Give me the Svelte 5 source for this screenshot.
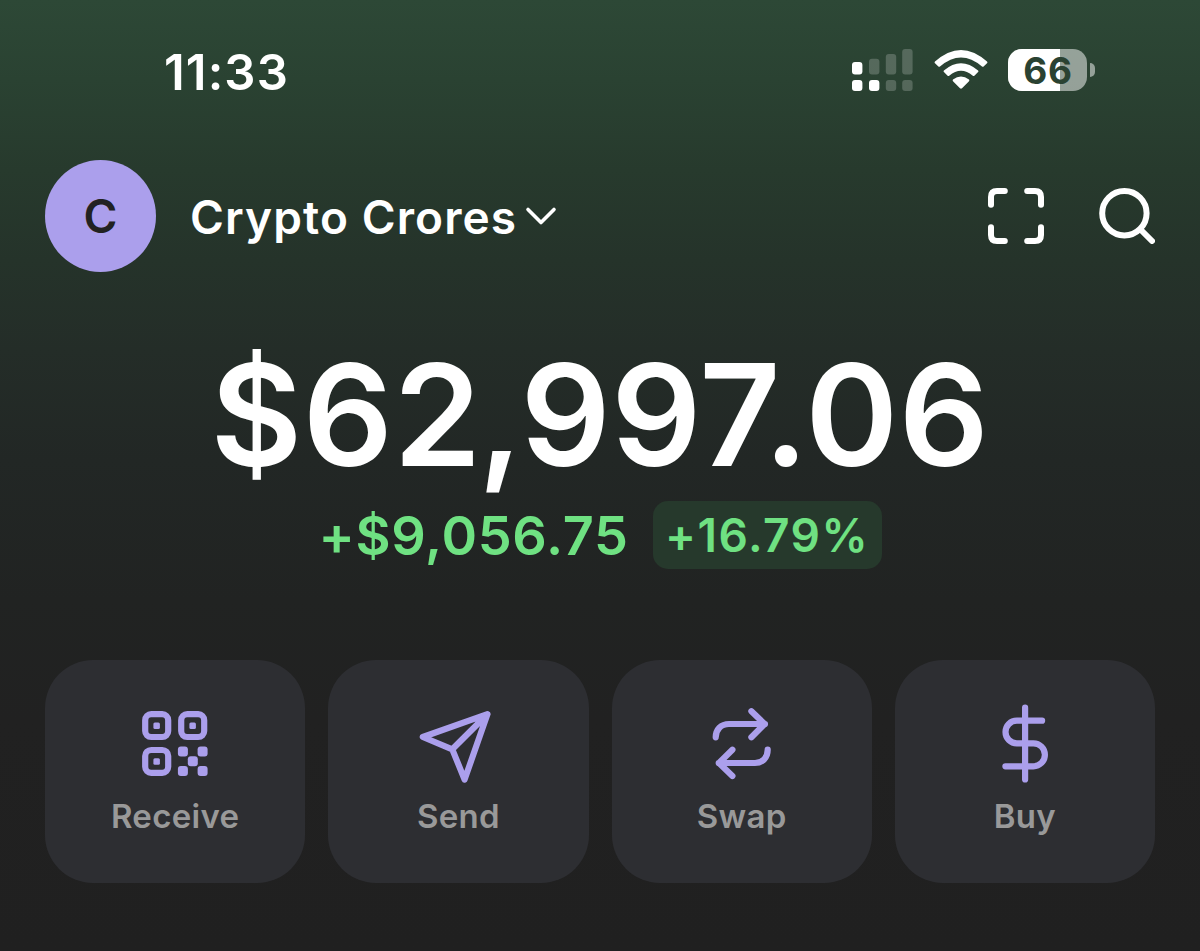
<script>
  let time = "11:33";
  let battery = 66;
  let account = "Crypto Crores";
  let balance = "$62,997.06";
  let change = "+$9,056.75";
  let percent = "+16.79%";

  let [thousands, rest] = balance.split(",");

  let actions = [
    { id: "receive", label: "Receive" },
    { id: "send", label: "Send" },
    { id: "swap", label: "Swap" },
    { id: "buy", label: "Buy" }
  ];
</script>

<main class="wallet">
  <div class="status">
    <span class="time">{time}</span>
    <div class="status-icons">
      <svg class="signal" viewBox="0 0 61 42" width="61" height="42" fill="#fff">
        <rect x="0" y="13" width="10.4" height="12.6" rx="3" />
        <g opacity="0.2">
          <rect x="17" y="9.7" width="10.4" height="15.9" rx="3" />
          <rect x="33.8" y="5" width="10.4" height="20.6" rx="3" />
          <rect x="50.2" y="0" width="10.4" height="25.6" rx="3" />
          <rect x="33.8" y="31" width="10.4" height="11" rx="3" />
          <rect x="50.2" y="31" width="10.4" height="11" rx="3" />
        </g>
        <rect x="0" y="31" width="10.4" height="11" rx="3" />
        <rect x="17" y="31" width="10.4" height="11" rx="3" />
      </svg>
      <svg class="wifi" viewBox="0 0 54 40" width="54" height="40" fill="#fff">
        <path d="M1 11.6 Q27 -11.6 53 11.6 Q53.8 12.4 53 13.2 L49.6 16.5 Q48.8 17.2 48 16.5 Q27 -1.6 6 16.5 Q5.2 17.2 4.4 16.5 L1 13.2 Q0.2 12.4 1 11.6 Z" />
        <path d="M9.9 20.5 Q27 6 44.1 20.5 Q44.9 21.3 44.1 22.1 L40.4 25.7 Q39.6 26.4 38.8 25.7 Q27 15.8 15.2 25.7 Q14.4 26.4 13.6 25.7 L9.9 22.1 Q9.1 21.3 9.9 20.5 Z" />
        <path d="M19 29.6 Q27 23.6 35 29.6 Q35.8 30.4 35 31.2 L28 38.3 Q27 39.2 26 38.3 L19 31.2 Q18.2 30.4 19 29.6 Z" />
      </svg>
      <div class="battery">
        <div class="cell">
          <div class="level" style="width: {battery}%"></div>
          <span class="battery-text">{battery}</span>
        </div>
        <div class="nub"></div>
      </div>
    </div>
  </div>

  <header class="header">
    <div class="avatar">C</div>
    <div class="account">
      <span class="account-name">{account}</span>
      <svg class="chevron" viewBox="0 0 32 20" width="32" height="20">
        <path d="M3 3.5 L16 16.5 L29 3.5" />
      </svg>
    </div>
    <svg class="tool" viewBox="0 0 56 56" width="56" height="56">
      <path d="M3 16.8 V9 Q3 3 9 3 H16.8 M39.2 3 H47 Q53 3 53 9 V16.8 M53 39.2 V47 Q53 53 47 53 H39.2 M16.8 53 H9 Q3 53 3 47 V39.2" />
    </svg>
    <svg class="tool" viewBox="0 0 56 56" width="56" height="56">
      <circle cx="25.4" cy="25.2" r="22.2" />
      <path d="M41.5 41.5 L53 53" />
    </svg>
  </header>

  <section class="summary">
    <div class="balance">{thousands}<span class="comma">,</span>{rest}</div>
    <div class="change">
      <span class="amount">{change}</span>
      <span class="percent">{percent}</span>
    </div>
  </section>

  <nav class="actions">
    {#each actions as action (action.id)}
      <div class="action">
        <svg class="icon" viewBox="0 0 84 84" width="84" height="84">
          {#if action.id === "receive"}
            <rect x="12.2" y="12.2" width="23" height="22.8" rx="6" />
            <rect x="48.2" y="12.2" width="23" height="22.8" rx="6" />
            <rect x="12.2" y="48" width="23" height="22.8" rx="6" />
            <g class="solid">
              <rect x="20.4" y="20.4" width="6.5" height="6.5" rx="1.5" />
              <rect x="56.4" y="20.4" width="6.5" height="6.5" rx="1.5" />
              <rect x="20.4" y="56.2" width="6.5" height="6.5" rx="1.5" />
              <rect x="44.9" y="44.6" width="10" height="10" rx="3" />
              <rect x="64.6" y="44.6" width="10" height="10" rx="3" />
              <rect x="54.8" y="54.3" width="10" height="10" rx="3" />
              <rect x="44.9" y="64.1" width="10" height="10" rx="3" />
              <rect x="64.6" y="64.1" width="10" height="10" rx="3" />
            </g>
          {:else if action.id === "send"}
            <path d="M71.4 12.2 L6.8 35 L36.3 47.3 L48.6 77.6 Z M71.4 12.2 L36.3 47.3" />
          {:else if action.id === "swap"}
            <path d="M15.7 35.3 C15.7 27.5 21 22 29 22 H65 M51.4 9.2 L64.6 22 L51.4 35.3" />
            <path d="M67.7 47.7 C67.7 55.5 62.5 61 55 61 H18.7 M32.4 47.7 L19 61 L32.4 74" />
          {:else}
            <path d="M42.1 5.7 V77.5 M59.1 18.7 H33.8 A11.3 11.3 0 0 0 33.8 41.3 H50.4 A11.5 11.5 0 0 1 50.4 64.3 H22.4" />
          {/if}
        </svg>
        <span class="label">{action.label}</span>
      </div>
    {/each}
  </nav>
</main>

<style>
  :global(body) {
    margin: 0;
    background: #212121;
  }

  .wallet {
    box-sizing: border-box;
    width: 1200px;
    height: 951px;
    padding: 0 45px;
    overflow: hidden;
    font-family: Inter, "Liberation Sans", sans-serif;
    color: #fff;
    background: linear-gradient(#2d4836 0, #2a4232 80px, #273a2d 170px, #25332a 260px, #242d28 350px, #222725 460px, #212322 600px, #212121 720px, #202020 951px);
  }

  .status {
    display: flex;
    justify-content: space-between;
    align-items: center;
    height: 140px;
    padding: 0 60px 0 119px;
  }

  .time {
    padding-top: 5px;
    font-size: 49px;
    font-weight: 600;
    line-height: 58px;
    letter-spacing: 1.1px;
  }

  .status-icons {
    display: flex;
    align-items: center;
    height: 42px;
  }

  .wifi {
    margin: 0 20px 0 21px;
  }

  .battery {
    display: flex;
    align-items: center;
    gap: 3px;
  }

  .cell {
    position: relative;
    width: 79px;
    height: 42px;
    border-radius: 14px;
    background: rgba(255, 255, 255, 0.5);
  }

  .level {
    height: 100%;
    border-radius: 14px 0 0 14px;
    background: #fff;
  }

  .battery-text {
    position: absolute;
    top: 0;
    left: 0;
    width: 80px;
    line-height: 43px;
    text-align: center;
    font-size: 37px;
    font-weight: 700;
    letter-spacing: 0.6px;
    color: #2a4232;
  }

  .nub {
    width: 5px;
    height: 14px;
    border-radius: 0 5px 5px 0;
    background: rgba(255, 255, 255, 0.5);
  }

  .header {
    display: flex;
    align-items: center;
    height: 112px;
    margin-top: 20px;
  }

  .avatar {
    width: 111px;
    height: 112px;
    border-radius: 50%;
    background: #ab9fec;
    color: #222;
    font-size: 46px;
    font-weight: 600;
    line-height: 113px;
    text-align: center;
  }

  .account {
    display: flex;
    align-items: center;
    flex: 1;
    margin-left: 34px;
  }

  .account-name {
    padding-top: 2px;
    font-size: 46px;
    font-weight: 600;
    line-height: 60px;
    letter-spacing: 1.1px;
  }

  .chevron {
    margin-left: 8px;
  }

  .chevron path {
    fill: none;
    stroke: #fff;
    stroke-width: 3.6;
    stroke-linecap: round;
    stroke-linejoin: round;
  }

  .tool {
    fill: none;
    stroke: #fff;
    stroke-width: 6;
    stroke-linecap: round;
  }

  .tool + .tool {
    margin-left: 55px;
  }

  .summary {
    height: 388px;
    text-align: center;
  }

  .balance {
    padding-top: 58px;
    font-size: 141px;
    font-weight: 600;
    line-height: 170px;
    letter-spacing: 0.6px;
    white-space: nowrap;
  }

  /* tighten the gap round the separator */
  .comma {
    margin: 0 -3px 0 -4px;
  }

  .change {
    display: flex;
    justify-content: center;
    align-items: center;
    gap: 24px;
    height: 68px;
    margin-top: 1px;
    color: #6fe182;
  }

  .amount {
    font-size: 54px;
    font-weight: 600;
    letter-spacing: 0.7px;
  }

  .percent {
    box-sizing: border-box;
    width: 229px;
    height: 68px;
    border-radius: 15px;
    background: #26392c;
    font-size: 46px;
    font-weight: 600;
    line-height: 68px;
    letter-spacing: 1.5px;
  }

  .actions {
    display: grid;
    grid-template-columns: repeat(4, 1fr);
    gap: 23px;
  }

  .action {
    display: flex;
    flex-direction: column;
    align-items: center;
    box-sizing: border-box;
    height: 223px;
    padding-top: 42px;
    border-radius: 48px;
    background: #2d2e32;
  }

  .icon {
    fill: none;
    stroke: #ab9fec;
    stroke-width: 6.2;
    stroke-linecap: round;
    stroke-linejoin: round;
  }

  .solid {
    fill: #ab9fec;
    stroke: none;
  }

  .label {
    margin-top: 9px;
    font-size: 33px;
    font-weight: 600;
    line-height: 42px;
    letter-spacing: 0.3px;
    color: #999;
  }
</style>
